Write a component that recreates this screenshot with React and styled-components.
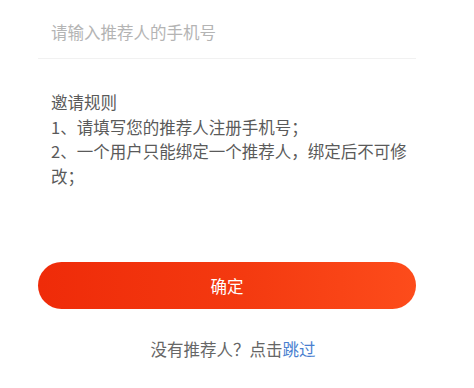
import React from "react";
import styled, { createGlobalStyle } from "styled-components";

const Global = createGlobalStyle`
  html, body { margin: 0; padding: 0; background: #ffffff; }
  body { font-family: "Noto Sans CJK SC", "Noto Sans", sans-serif; }
`;

const Page = styled.div`
  display: flex;
  flex-direction: column;
  padding: 0 58px 0 38px;
  width: 474px;
  box-sizing: border-box;
`;

const InputRow = styled.div`
  padding: 20px 13px 14px;
  border-bottom: 1px solid #f1f1f1;
`;

const Input = styled.input`
  display: block;
  width: 100%;
  border: none;
  outline: none;
  padding: 0;
  margin: 0;
  height: 24px;
  line-height: 24px;
  font-family: inherit;
  font-size: 16.5px;
  color: #333;
  background: transparent;
  &::placeholder { color: #b4b4b4; }
`;

const Rules = styled.div`
  margin-top: 31px;
  padding: 0 0 0 13px;
  font-size: 16.5px;
  line-height: 24.5px;
  color: #5a5a5a;
`;

const Line = styled.div``;

const Button = styled.button`
  margin-top: 74px;
  height: 47px;
  border: none;
  border-radius: 24px;
  background: linear-gradient(90deg, #ef2b09 0%, #f43a10 55%, #fd4c1b 100%);
  color: #ffffff;
  font-family: inherit;
  font-size: 16.5px;
  display: flex;
  align-items: center;
  justify-content: center;
  cursor: pointer;
`;

const Footer = styled.div`
  margin-top: 28px;
  padding-left: 12px;
  text-align: center;
  font-size: 16.5px;
  line-height: 24px;
  color: #666666;
`;

const Link = styled.span`
  color: #4a7fd0;
`;

export default function App() {
  return (
    <>
      <Global />
      <Page>
        <InputRow>
          <Input placeholder="请输入推荐人的手机号" />
        </InputRow>
        <Rules>
          <Line>邀请规则</Line>
          <Line>1、请填写您的推荐人注册手机号；</Line>
          <Line>2、一个用户只能绑定一个推荐人，绑定后不可修改；</Line>
        </Rules>
        <Button>确定</Button>
        <Footer>
          没有推荐人？点击<Link>跳过</Link>
        </Footer>
      </Page>
    </>
  );
}
